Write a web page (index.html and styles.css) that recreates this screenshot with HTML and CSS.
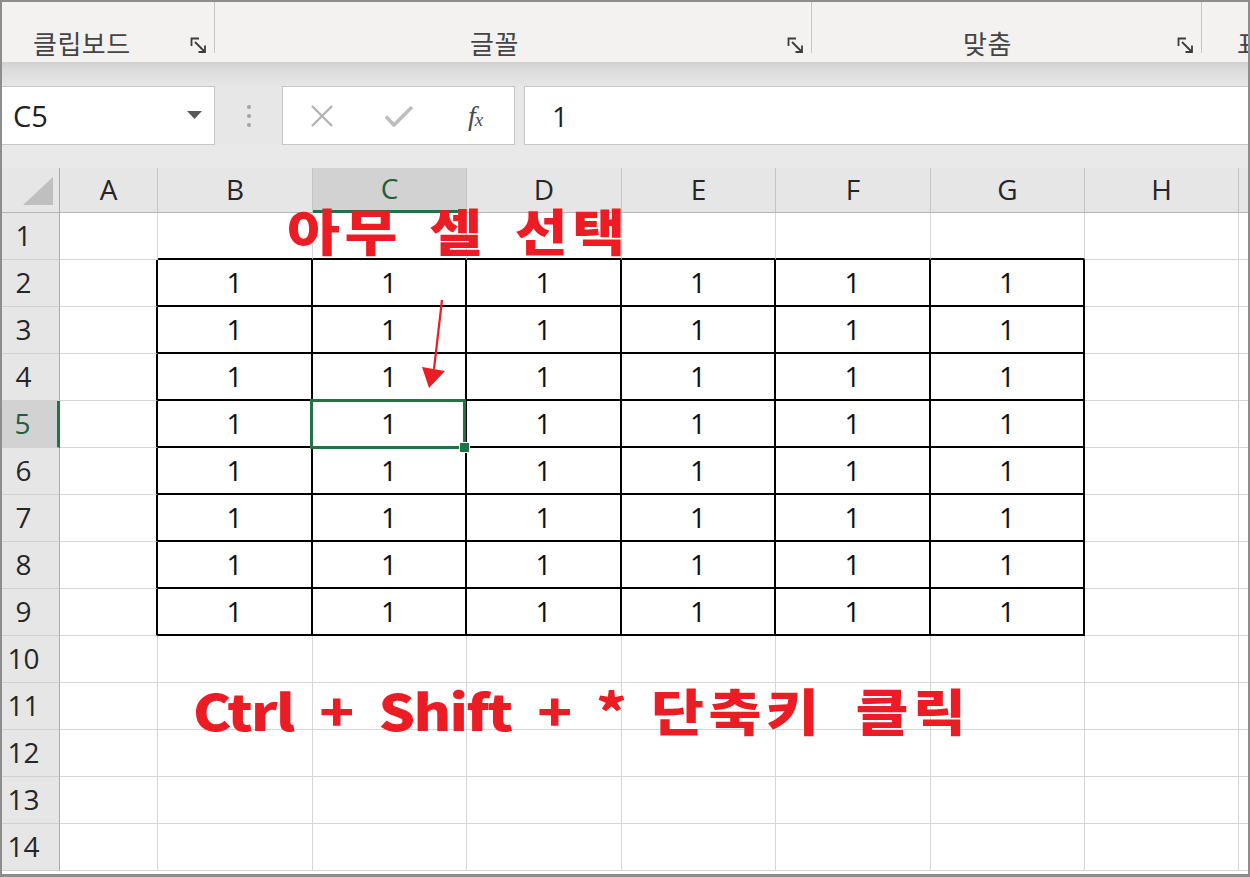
FILE: index.html
```html
<!DOCTYPE html>
<html lang="ko">
<head>
<meta charset="utf-8">
<title>Excel</title>
<link rel="stylesheet" href="styles.css">
</head>
<body>
<div class="window">
  <div class="ribbon">
    <div class="group g1"><span class="glabel">클립보드</span><svg class="launch" width="18" height="17" viewBox="0 0 18 17"><path d="M1.5 9V1.5H9M5 5l10 10M15 8.5V15H8.5" fill="none" stroke="#3c3c3c" stroke-width="1.8"/></svg></div>
    <div class="group g2"><span class="glabel">글꼴</span><svg class="launch" width="18" height="17" viewBox="0 0 18 17"><path d="M1.5 9V1.5H9M5 5l10 10M15 8.5V15H8.5" fill="none" stroke="#3c3c3c" stroke-width="1.8"/></svg></div>
    <div class="group g3"><span class="glabel">맞춤</span><svg class="launch" width="18" height="17" viewBox="0 0 18 17"><path d="M1.5 9V1.5H9M5 5l10 10M15 8.5V15H8.5" fill="none" stroke="#3c3c3c" stroke-width="1.8"/></svg></div>
    <div class="group g4"><span class="glabel">표</span></div>
  </div>
  <div class="band"></div>
  <div class="fbar">
    <div class="namebox"><span class="nbtext">C5</span><svg class="nbarrow" width="15" height="8" viewBox="0 0 15 8"><path d="M0 0H15L7.5 8Z" fill="#595959"/></svg></div>
    <div class="dots"><i></i><i></i><i></i></div>
    <div class="fbtns">
      <span class="fb"><svg width="24" height="24" viewBox="0 0 24 24"><path d="M2 2L22 22M22 2L2 22" stroke="#b5b5b5" stroke-width="2.4" fill="none"/></svg></span>
      <span class="fb"><svg width="30" height="24" viewBox="0 0 30 24"><path d="M2 12.5L10 21L28 3" stroke="#bdbdbd" stroke-width="3.6" fill="none" stroke-linejoin="round"/></svg></span>
      <span class="fb fx"><span class="fxf">f</span><span class="fxx">x</span></span>
    </div>
    <div class="finput">1</div>
  </div>
  <div class="gapband"></div>
  <div class="sheet">
    <div class="grid">
      <div class="corner"><svg width="30" height="28" viewBox="0 0 30 28"><path d="M30 0V28H0Z" fill="#bfbfbf"/></svg></div>
      <div class="ch">A</div><div class="ch">B</div><div class="ch sel">C</div><div class="ch">D</div><div class="ch">E</div><div class="ch">F</div><div class="ch">G</div><div class="ch">H</div><div class="ch last"></div>

      <div class="rh">1</div><div class="c"></div><div class="c tt"></div><div class="c tt"></div><div class="c tt"></div><div class="c tt"></div><div class="c tt"></div><div class="c tt"></div><div class="c"></div><div class="c last"></div>

      <div class="rh">2</div><div class="c tl"></div><div class="c t">1</div><div class="c t">1</div><div class="c t">1</div><div class="c t">1</div><div class="c t">1</div><div class="c t">1</div><div class="c"></div><div class="c last"></div>
      <div class="rh">3</div><div class="c tl"></div><div class="c t">1</div><div class="c t">1</div><div class="c t">1</div><div class="c t">1</div><div class="c t">1</div><div class="c t">1</div><div class="c"></div><div class="c last"></div>
      <div class="rh">4</div><div class="c tl"></div><div class="c t">1</div><div class="c t">1</div><div class="c t">1</div><div class="c t">1</div><div class="c t">1</div><div class="c t">1</div><div class="c"></div><div class="c last"></div>
      <div class="rh sel">5</div><div class="c tl"></div><div class="c t">1</div><div class="c t act">1<span class="handle"></span></div><div class="c t">1</div><div class="c t">1</div><div class="c t">1</div><div class="c t">1</div><div class="c"></div><div class="c last"></div>
      <div class="rh">6</div><div class="c tl"></div><div class="c t">1</div><div class="c t">1</div><div class="c t">1</div><div class="c t">1</div><div class="c t">1</div><div class="c t">1</div><div class="c"></div><div class="c last"></div>
      <div class="rh">7</div><div class="c tl"></div><div class="c t">1</div><div class="c t">1</div><div class="c t">1</div><div class="c t">1</div><div class="c t">1</div><div class="c t">1</div><div class="c"></div><div class="c last"></div>
      <div class="rh">8</div><div class="c tl"></div><div class="c t">1</div><div class="c t">1</div><div class="c t">1</div><div class="c t">1</div><div class="c t">1</div><div class="c t">1</div><div class="c"></div><div class="c last"></div>
      <div class="rh">9</div><div class="c tl"></div><div class="c t">1</div><div class="c t">1</div><div class="c t">1</div><div class="c t">1</div><div class="c t">1</div><div class="c t">1</div><div class="c"></div><div class="c last"></div>

      <div class="rh">10</div><div class="c"></div><div class="c"></div><div class="c"></div><div class="c"></div><div class="c"></div><div class="c"></div><div class="c"></div><div class="c"></div><div class="c last"></div>
      <div class="rh">11</div><div class="c"></div><div class="c"></div><div class="c"></div><div class="c"></div><div class="c"></div><div class="c"></div><div class="c"></div><div class="c"></div><div class="c last"></div>
      <div class="rh">12</div><div class="c"></div><div class="c"></div><div class="c"></div><div class="c"></div><div class="c"></div><div class="c"></div><div class="c"></div><div class="c"></div><div class="c last"></div>
      <div class="rh">13</div><div class="c"></div><div class="c"></div><div class="c"></div><div class="c"></div><div class="c"></div><div class="c"></div><div class="c"></div><div class="c"></div><div class="c last"></div>
      <div class="rh">14</div><div class="c"></div><div class="c"></div><div class="c"></div><div class="c"></div><div class="c"></div><div class="c"></div><div class="c"></div><div class="c"></div><div class="c last"></div>
    </div>
    <div class="note n1"><span class="han">아무 셀 선택</span></div>
    <svg class="arrow" width="40" height="100" viewBox="0 0 40 100"><path d="M30 5L22 74" stroke="#ec1c24" stroke-width="2.2" fill="none"/><path d="M10 72L33 76L17 93Z" fill="#ec1c24"/></svg>
    <div class="note n2"><span class="lat">Ctrl + Shift + * </span><span class="han">단축키 클릭</span></div>
  </div>
</div>
</body>
</html>
```

FILE: styles.css
```css
* { box-sizing: border-box; }
html, body { margin: 0; padding: 0; background: #fff; }
body { font-family: "Open Sans", "Noto Sans CJK KR", sans-serif; color: #222; }

.window {
  width: 1250px;
  height: 877px;
  border: 2px solid #8d8d8d;
  border-bottom-width: 3px;
  overflow: hidden;
  background: #e7e7e7;
  display: flex;
  flex-direction: column;
}

/* ribbon */
.ribbon { height: 60px; flex: none; display: flex; background: #f3f2f1; }
.group {
  flex: none;
  height: 60px;
  display: flex;
  align-items: flex-start;
  padding-top: 26px;
  background: linear-gradient(#c8c6c4, #c8c6c4) right top / 1px 51px no-repeat;
}
.glabel {
  font-family: "Noto Sans CJK KR", sans-serif;
  font-size: 26px;
  line-height: 30px;
  color: #444;
  letter-spacing: 0.5px;
  white-space: nowrap;
}
.launch { margin-left: auto; margin-right: 7px; margin-top: 9px; flex: none; }
.g1 { width: 213px; padding-left: 31px; }
.g2 { width: 597px; padding-left: 255px; }
.g3 { width: 390px; padding-left: 151px; }
.g4 { flex: 1 1 0; min-width: 0; overflow: hidden; padding-left: 35px; background: none; }

.band { height: 24px; flex: none; background: linear-gradient(#d0d0d0, #dcdcdc 35%, #e6e6e6); }

/* formula bar */
.fbar { height: 59px; flex: none; display: flex; }
.namebox {
  width: 213px;
  background: #fff;
  border: 1px solid #c6c6c6;
  border-left: none;
  display: flex;
  align-items: center;
  padding-left: 11px;
  padding-right: 12px;
}
.nbtext { font-size: 29px; color: #222; flex: 1; }
.nbarrow { flex: none; margin-top: -2px; }
.dots { width: 67px; display: flex; flex-direction: column; align-items: center; justify-content: center; gap: 5px; }
.dots i { width: 4px; height: 4px; border-radius: 50%; background: #a3a3a3; display: block; }
.fbtns {
  width: 233px;
  background: #fff;
  border: 1px solid #c6c6c6;
  display: flex;
  align-items: center;
  padding-left: 1px;
}
.fb { width: 77px; display: flex; justify-content: center; align-items: center; }
.fx { font-family: "Liberation Serif", "DejaVu Serif", serif; font-style: italic; color: #4a4a4a; }
.fxf { font-size: 28px; line-height: 1; }
.fxx { font-size: 19px; line-height: 1; margin-left: -1px; margin-top: 8px; }
.finput {
  flex: 1;
  margin-left: 9px;
  background: #fff;
  border: 1px solid #c6c6c6;
  border-right: none;
  padding-left: 27px;
  font-size: 28px;
  display: flex;
  align-items: center;
  color: #222;
}
.gapband { height: 23px; flex: none; background: #e9e9e9; }

/* sheet */
.sheet { flex: 1; position: relative; background: #fff; }
.grid {
  display: grid;
  grid-template-columns: 58px 98px 155px 154px 155px 154px 155px 154px 154px 1fr;
  grid-template-rows: 45px repeat(14, 47px);
  font-size: 28px;
  line-height: 1.2;
}
.grid > div { display: flex; align-items: center; justify-content: center; }
.grid > .corner {
  background: #e6e6e6;
  border-right: 1px solid #ababab;
  border-bottom: 1px solid #b6b6b6;
  justify-content: flex-end;
  align-items: flex-end;
  padding: 0 6px 7px 0;
}
.ch {
  background: #e6e6e6;
  border-right: 1px solid #c4c4c4;
  border-bottom: 1px solid #b6b6b6;
  color: #262626;
}
.ch.last { border-right: none; }
.ch.sel { background: #d2d2d2; color: #1f5f3b; border-bottom: 3px solid #217346; }
.rh {
  background: #e6e6e6;
  border-right: 1px solid #ababab;
  border-bottom: 1px solid #d0d0d0;
  padding-right: 14px;
  color: #262626;
}
.rh.sel { background: #d2d2d2; color: #1f5f3b; border-right: 3px solid #217346; }
.c { border-right: 1px solid #d6d6d6; border-bottom: 1px solid #d6d6d6; color: #111; }
.c.last { border-right: none; }
.c.tt { border-bottom: 2px solid #000; }
.c.tl { border-right: 2px solid #000; }
.c.t { border-right: 2px solid #000; border-bottom: 2px solid #000; }
.c.act { position: relative; }
.c.act::after {
  content: "";
  position: absolute;
  left: -3px; top: -2px; right: -1px; bottom: -3px;
  border: 3px solid #217346;
  border-radius: 1px;
}
.handle {
  position: absolute;
  right: -5px; bottom: -7px;
  width: 11px; height: 11px;
  background: #217346;
  border: 1px solid #fff;
  z-index: 1;
}

.note {
  position: absolute;
  font-family: "Noto Sans CJK KR", sans-serif;
  font-weight: 900;
  color: #ec1c24;
  font-size: 50px;
  line-height: 36px;
  white-space: nowrap;
  transform: scaleX(1.15);
  transform-origin: left top;
}
.lat { letter-spacing: -1.5px; }
.han { letter-spacing: 4px; }
.n1 { left: 285px; top: 43px; word-spacing: 6px; }
.n2 { left: 191px; top: 523px; word-spacing: 10px; }
.arrow { position: absolute; left: 410px; top: 127px; }
```
